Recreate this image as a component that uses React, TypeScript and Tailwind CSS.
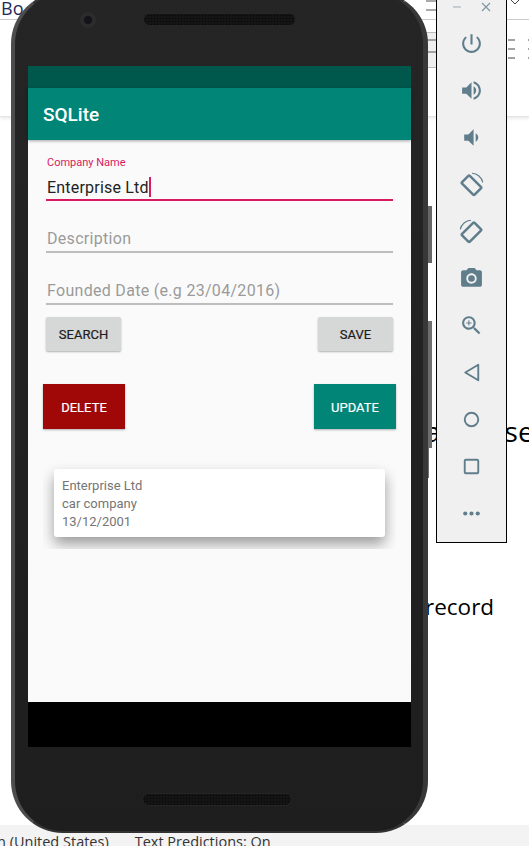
import React from 'react';

const iconPaths = {
  power: 'M13 3h-2v10h2V3zm4.83 2.17l-1.42 1.42C17.99 7.86 19 9.81 19 12c0 3.87-3.13 7-7 7s-7-3.13-7-7c0-2.19 1.01-4.14 2.58-5.42L6.17 5.17C4.23 6.82 3 9.26 3 12c0 4.97 4.03 9 9 9s9-4.03 9-9c0-2.74-1.23-5.18-3.17-6.83z',
  volumeUp: 'M3 9v6h4l5 5V4L7 9H3zm13.5 3c0-1.77-1.02-3.29-2.5-4.03v8.05c1.48-.73 2.5-2.25 2.5-4.02zM14 3.23v2.06c2.89.86 5 3.54 5 6.71s-2.11 5.85-5 6.71v2.06c4.01-.91 7-4.49 7-8.77s-2.99-7.86-7-8.77z',
  volumeDown: 'M18.5 12c0-1.77-1.02-3.29-2.5-4.03v8.05c1.48-.73 2.5-2.25 2.5-4.02zM5 9v6h4l5 5V4L9 9H5z',
  camera: 'M9 2L7.17 4H4c-1.1 0-2 .9-2 2v12c0 1.1.9 2 2 2h16c1.1 0 2-.9 2-2V6c0-1.1-.9-2-2-2h-3.17L15 2H9zm3 15c-2.76 0-5-2.24-5-5s2.24-5 5-5 5 2.24 5 5-2.24 5-5 5z M12 8.8a3.2 3.2 0 1 0 0 6.4 3.2 3.2 0 0 0 0-6.4z',
  zoom: 'M15.5 14h-.79l-.28-.27C15.41 12.59 16 11.11 16 9.5 16 5.91 13.09 3 9.5 3S3 5.91 3 9.5 5.91 16 9.5 16c1.61 0 3.09-.59 4.23-1.57l.27.28v.79l5 4.99L20.49 19l-4.99-5zm-6 0C7.01 14 5 11.99 5 9.5S7.01 5 9.5 5 14 7.01 14 9.5 11.99 14 9.5 14zm2.5-4h-2v2H9v-2H7V9h2V7h1v2h2v1z',
};

const ToolIcon = ({ d }: { d: string }) => (
  <svg viewBox="0 0 24 24" className="w-[25px] h-[25px] fill-[#607d8b]">
    <path d={d} fillRule="evenodd" />
  </svg>
);

const RotateIcon = ({ flip }: { flip?: boolean }) => (
  <svg viewBox="0 0 24 24" className={`w-[25px] h-[25px] fill-none stroke-[#607d8b] ${flip ? '-scale-x-100' : ''}`}>
    <rect x="3.5" y="7.5" width="17" height="10.5" rx="1" strokeWidth="2.4" transform="rotate(45 12 12.75)" />
    <path d="M12.5 1.2C17.5 1.4 21.8 5 22.8 10" strokeWidth="1.1" />
  </svg>
);

const Slot = ({ children }: { children: React.ReactNode }) => (
  <div className="h-[47px] flex items-center justify-center">{children}</div>
);

const EmulatorBar = () => (
  <div className="absolute left-[436px] top-[-2px] w-[71px] h-[545px] bg-[#f0f0f0] border border-black z-20">
    <div className="h-[21px] flex items-start justify-center gap-[19px] pt-[3px]">
      <svg viewBox="0 0 10 10" className="w-[10px] h-[10px] stroke-[#a9b7be] stroke-[1.2]"><path d="M1 5h8" /></svg>
      <svg viewBox="0 0 10 10" className="w-[10px] h-[10px] stroke-[#7f97a3] stroke-[1.2]"><path d="M1 1l8 8M9 1l-8 8" /></svg>
    </div>
    <div className="flex flex-col">
      <Slot><ToolIcon d={iconPaths.power} /></Slot>
      <Slot><ToolIcon d={iconPaths.volumeUp} /></Slot>
      <Slot><ToolIcon d={iconPaths.volumeDown} /></Slot>
      <Slot><RotateIcon /></Slot>
      <Slot><RotateIcon flip /></Slot>
      <Slot><ToolIcon d={iconPaths.camera} /></Slot>
      <Slot><ToolIcon d={iconPaths.zoom} /></Slot>
      <Slot>
        <svg viewBox="0 0 24 24" className="w-[25px] h-[25px] fill-none stroke-[#607d8b] stroke-[1.8]"><path d="M18.5 4.5v15L6 12z" strokeLinejoin="round" /></svg>
      </Slot>
      <Slot>
        <svg viewBox="0 0 24 24" className="w-[25px] h-[25px] fill-none stroke-[#607d8b] stroke-[1.8]"><circle cx="12" cy="12" r="6.5" /></svg>
      </Slot>
      <Slot>
        <svg viewBox="0 0 24 24" className="w-[25px] h-[25px] fill-none stroke-[#607d8b] stroke-[1.8]"><rect x="5.5" y="5.5" width="13" height="13" rx="1" /></svg>
      </Slot>
      <Slot>
        <svg viewBox="0 0 24 24" className="w-[25px] h-[25px] fill-[#607d8b]"><circle cx="6" cy="12" r="2" /><circle cx="12" cy="12" r="2" /><circle cx="18" cy="12" r="2" /></svg>
      </Slot>
    </div>
  </div>
);

const Speaker = ({ className }: { className: string }) => (
  <div className={`absolute h-[13px] rounded-full bg-[#141414] bg-[radial-gradient(#050505_1px,transparent_1px)] bg-[length:3px_3px] border border-[#262626] ${className}`} />
);

const HintField = ({ hint }: { hint: string }) => (
  <div className="h-[52px] pt-[26px] pl-[1px] border-b-2 border-[#bdbdbd] text-[16px] leading-[24px] text-[#9a9a9a] tracking-[0.3px]">{hint}</div>
);

const GreyButton = ({ label }: { label: string }) => (
  <button className="w-[75px] h-[34px] pt-[1px] bg-[#d6d7d7] rounded-[2px] shadow-[0_1px_2px_rgba(0,0,0,0.3)] text-[13px] text-[#1c1c1c] [-webkit-text-stroke:0.2px_#1c1c1c]">{label}</button>
);

const Phone = () => (
  <div className="absolute left-[11px] top-[-8px] w-[417px] h-[841px] rounded-[52px] bg-[linear-gradient(#252525,#1e1e1e)] border-l-4 border-r-[5px] border-t-2 border-b-2 border-l-[#4d4d4d] border-r-[#383838] border-t-[#333] border-b-[#333] z-10">
    <div className="relative h-[72px]">
      <div className="absolute left-[65px] top-[18px] w-[16px] h-[16px] rounded-full bg-[#2c2c2c] flex items-center justify-center">
        <div className="w-[8px] h-[8px] rounded-full bg-[#15131a]" />
      </div>
      <Speaker className="left-[128px] top-[19px] w-[153px]" />
    </div>
    <div className="ml-[13px] w-[383px] h-[681px] flex flex-col font-['Roboto',sans-serif]">
      <div className="h-[22px] bg-[#00574b]" />
      <div className="h-[52px] pt-[2px] bg-[#008577] shadow-[0_1px_3px_rgba(0,0,0,0.35)] z-10 flex items-center pl-[15px] text-[19px] font-medium text-white">SQLite</div>
      <div className="h-[562px] bg-[#fafafa]">
        <div className="mx-[18px] w-[347px]">
          <div className="h-[61px] pt-[16px] pl-[1px] border-b-2 border-[#d81b60]">
            <div className="text-[11px] leading-[13px] text-[#d81b60]">Company Name</div>
            <div className="mt-[7px] text-[16px] leading-[24px] text-[#222] tracking-[0.2px] flex">
              <span>Enterprise Ltd</span>
              <span className="w-[2px] h-[20px] mt-[1px] bg-[#d81b60]" />
            </div>
          </div>
          <HintField hint="Description" />
          <HintField hint="Founded Date (e.g 23/04/2016)" />
          <div className="flex justify-between mt-[12px]">
            <GreyButton label="SEARCH" />
            <GreyButton label="SAVE" />
          </div>
        </div>
        <div className="mx-[15px] w-[353px] flex justify-between mt-[33px]">
          <button className="w-[82px] h-[45px] pt-[2px] bg-[#a00808] shadow-[0_1px_2px_rgba(0,0,0,0.3)] text-[13px] text-white [-webkit-text-stroke:0.2px_#ffffff]">DELETE</button>
          <button className="w-[82px] h-[45px] pt-[2px] bg-[#008577] shadow-[0_1px_2px_rgba(0,0,0,0.3)] text-[13px] text-white [-webkit-text-stroke:0.2px_#ffffff]">UPDATE</button>
        </div>
        <div className="mx-[15px] w-[353px] mt-[30px] h-[90px] pt-[10px] px-[11px] overflow-hidden">
          <div className="h-[68px] bg-white rounded-[3px] shadow-[0_7px_14px_rgba(0,0,0,0.38)] px-[8px] py-[8px] text-[13px] leading-[18px] text-[#757575]">
            <div>Enterprise Ltd</div>
            <div>car company</div>
            <div>13/12/2001</div>
          </div>
        </div>
      </div>
      <div className="h-[45px] bg-black" />
    </div>
    <div className="relative">
      <Speaker className="left-[127px] top-[46px] w-[150px]" />
    </div>
  </div>
);

// bits of the word processor ribbon that show around the phone
const RibbonBits = () => (
  <>
    <div className="absolute left-[420px] top-[32px] w-[16px] h-[36px] bg-[#eeeeee] border-y border-[#bbbbbb]" />
    <svg viewBox="0 0 22 62" className="absolute left-[507px] top-0 w-[22px] h-[62px] stroke-[#444] fill-none">
      <path d="M3 -1l5 5 5-5M1 40h7M1 49h7M1 58h7" />
      <path d="M21 40h2M21 49h2M21 58h2" />
    </svg>
    <svg viewBox="0 0 12 56" className="absolute left-[425px] top-0 w-[12px] h-[56px] stroke-[#555] fill-none">
      <path d="M1 1h11M1 10h11M1 40h11M1 52h11" />
    </svg>
  </>
);

export default function App() {
  return (
    <div className="relative w-[529px] h-[846px] overflow-hidden bg-white font-['Open_Sans',sans-serif]">
      <div className="h-[117px] border-b border-[#e4e4e4] shadow-[0_2px_3px_rgba(0,0,0,0.08)]">
        <div className="h-[20px] border-b border-[#cccccc] text-[18px] leading-[16px] text-[#1f2a5a] pl-[1px]">Bo</div>
      </div>
      <RibbonBits />
      <div className="absolute left-[425px] top-[412px] text-[28px] leading-[38px] text-black w-[104px] whitespace-nowrap">a<span className="ml-[64px]">se</span></div>
      <div className="absolute left-[425px] top-[591px] text-[22.5px] leading-[32px] text-black">record</div>
      <div className="absolute left-[427px] top-[206px] w-[5px] h-[57px] bg-[#666666]" />
      <div className="absolute left-[427px] top-[321px] w-[5px] h-[127px] bg-[#6e6e6e]" />
      <div className="absolute left-[427px] top-[448px] w-[2px] h-[30px] bg-[#6e6e6e]" />
      <Phone />
      <EmulatorBar />
      <div className="absolute left-0 right-0 bottom-0 h-[21px] bg-[#f3f3f3] text-[14.5px] leading-[33px] text-[#333] whitespace-nowrap overflow-hidden">
        <span className="ml-[-3px]">n (United States)</span>
        <span className="ml-[26px]">Text Predictions: On</span>
      </div>
    </div>
  );
}
